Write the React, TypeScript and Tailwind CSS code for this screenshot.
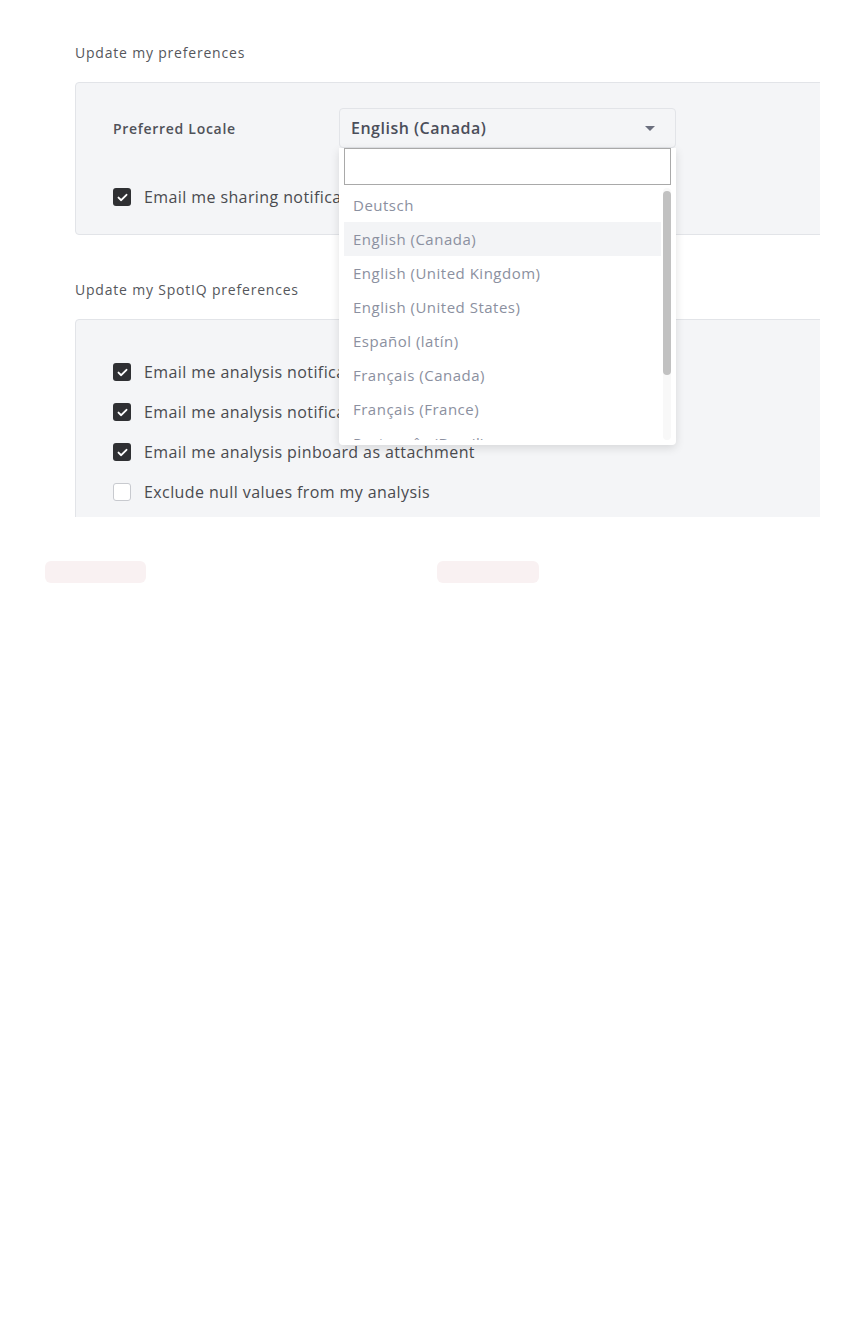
import React from "react";

const font = { fontFamily: '"Open Sans", "Liberation Sans", sans-serif' };

function Check({ checked }: { checked: boolean }) {
  if (!checked) {
    return <div className="w-[18px] h-[18px] rounded-[3px] border border-[#c8cacf] bg-white shrink-0" />;
  }
  return (
    <div className="w-[18px] h-[18px] rounded-[3px] bg-[#2f3033] flex items-center justify-center shrink-0">
      <svg width="11" height="9" viewBox="0 0 11 9" fill="none">
        <path d="M1.5 4.6 L4.2 7.2 L9.5 1.8" stroke="white" strokeWidth="1.9" strokeLinecap="round" strokeLinejoin="round" />
      </svg>
    </div>
  );
}

function Row({ checked, label }: { checked: boolean; label: string }) {
  return (
    <div className="flex items-center h-[18px]">
      <Check checked={checked} />
      <span className="ml-[13px] text-[16px] tracking-[0.4px] text-[#4a4b4f] whitespace-nowrap leading-[18px]">{label}</span>
    </div>
  );
}

const options = [
  "Deutsch",
  "English (Canada)",
  "English (United Kingdom)",
  "English (United States)",
  "Español (latín)",
  "Français (Canada)",
  "Français (France)",
  "Português (Brasil)",
];

export default function App() {
  return (
    <div className="w-[864px] min-h-[1344px] bg-white" style={font}>
      <div className="w-[820px] h-[517px] overflow-hidden pl-[75px] pt-[44px]">
        <div className="h-[18px] leading-[18px] text-[14px] tracking-[0.8px] text-[#55575c] whitespace-nowrap">Update my preferences</div>
        <div className="mt-[20px] w-[780px] h-[153px] rounded-[4px] border border-[#e2e4e8] bg-[#f4f5f7] pt-[25px] pl-[37px]">
          <div className="flex items-center h-[40px]">
            <div className="w-[226px] text-[14px] tracking-[0.7px] font-semibold text-[#505259] whitespace-nowrap">Preferred Locale</div>
            <div className="relative w-[337px] h-[40px]">
              <div className="w-[337px] h-[40px] rounded-[4px] border border-[#e2e4e8] bg-[#f4f5f7] flex items-center pl-[11px] pr-[20px] justify-between">
                <span className="text-[16px] tracking-[0.5px] font-semibold text-[#4b4e5a] whitespace-nowrap">English (Canada)</span>
                <svg width="10" height="5" viewBox="0 0 10 5">
                  <path d="M0 0 L10 0 L5 5 Z" fill="#6b6f7e" />
                </svg>
              </div>
              <div className="absolute left-0 top-[40px] w-[337px] h-[297px] bg-white rounded-b-[4px] shadow-[0_3px_10px_rgba(0,0,0,0.12)] z-10 px-[5px]">
                <div className="h-[37px] border border-[#a9a9a9] bg-white" />
                <div className="relative mt-[3px] h-[252px] overflow-hidden">
                  <div className="pr-[10px]">
                    {options.map((o, i) => (
                      <div
                        key={o}
                        className={
                          "h-[34px] flex items-center pl-[9px] text-[15px] tracking-[0.5px] text-[#8b90a0] whitespace-nowrap " +
                          (i === 1 ? "bg-[#f3f4f6]" : "")
                        }
                      >
                        {o}
                      </div>
                    ))}
                  </div>
                  <div className="absolute right-0 top-0 w-[8px] h-[252px] bg-[#f8f8f8] rounded-full">
                    <div className="mt-[3px] w-[8px] h-[184px] bg-[#c1c1c1] rounded-full" />
                  </div>
                </div>
              </div>
            </div>
          </div>
          <div className="mt-[40px]">
            <Row checked label="Email me sharing notifications" />
          </div>
        </div>
        <div className="mt-[46px] h-[18px] leading-[18px] text-[14px] tracking-[0.8px] text-[#55575c] whitespace-nowrap">Update my SpotIQ preferences</div>
        <div className="mt-[20px] w-[780px] h-[260px] rounded-[4px] border border-[#e2e4e8] bg-[#f4f5f7] pt-[43px] pl-[37px] flex flex-col gap-[22px]">
          <Row checked label="Email me analysis notifications on completion" />
          <Row checked label="Email me analysis notifications on failure" />
          <Row checked label="Email me analysis pinboard as attachment" />
          <Row checked={false} label="Exclude null values from my analysis" />
        </div>
      </div>
      <div className="mt-[44px] flex">
        <div className="ml-[45px] w-[101px] h-[22px] rounded-[6px] bg-[#f9f1f2]" />
        <div className="ml-[291px] w-[102px] h-[22px] rounded-[6px] bg-[#f9f1f2]" />
      </div>
    </div>
  );
}
